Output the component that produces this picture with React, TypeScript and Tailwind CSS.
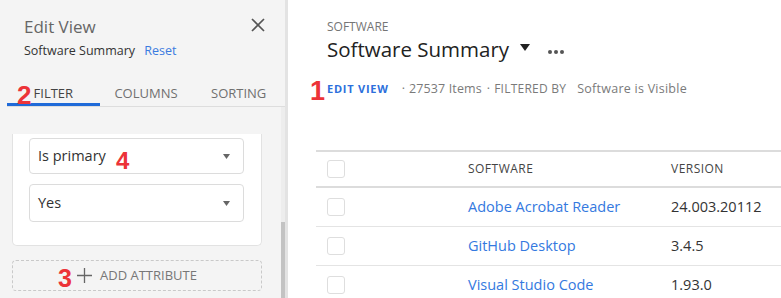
import { ReactNode } from 'react';

function Mark({ children, className = '' }: { children: ReactNode; className?: string }) {
  return (
    <span className={`absolute font-['Liberation_Sans',Arial,sans-serif] font-bold text-[#ec3338] leading-none ${className}`}>
      {children}
    </span>
  );
}

function Caret({ className = '' }: { className?: string }) {
  return (
    <svg className={className} viewBox="0 0 10 7" fill="currentColor">
      <path d="M0 0h10L5 7z" />
    </svg>
  );
}

function Select({ label, children }: { label: string; children?: ReactNode }) {
  return (
    <div className="relative flex items-center justify-between bg-white border border-[#dcdcdc] rounded-[4px] pl-[8px] pr-[13px] h-full">
      <span className="text-[14.5px] text-[#333]">{label}</span>
      {children}
      <Caret className="w-[7px] h-[5px] text-[#666]" />
    </div>
  );
}

function Checkbox() {
  return <div className="w-[18px] h-[18px] rounded-[3px] border border-[#dedede] bg-white" />;
}

const rows = [
  { name: 'Adobe Acrobat Reader', version: '24.003.20112' },
  { name: 'GitHub Desktop', version: '3.4.5' },
  { name: 'Visual Studio Code', version: '1.93.0' },
];

export default function App() {
  return (
    <div className="w-[781px] h-[298px] flex overflow-hidden bg-white font-['Open_Sans',sans-serif]">
      {/* Edit view panel */}
      <aside className="w-[288px] shrink-0 flex flex-col bg-[#f4f4f4] border-r-[3px] border-[#e3e3e3]">
        <div className="flex justify-between pl-[24px] pr-[20px] pt-[15px]">
          <h2 className="text-[17px] leading-[24px] text-[#666]">Edit View</h2>
          <svg className="w-[14px] h-[14px] mt-[3px] text-[#555]" viewBox="0 0 14 14" fill="none" stroke="currentColor" strokeWidth={1.7}>
            <path d="M1 1l12 12M13 1L1 13" />
          </svg>
        </div>
        <p className="pl-[24px] mt-[3px] text-[12.5px] leading-[18px] text-[#333]">
          Software Summary <span className="ml-[6px] text-[#3b7be0]">Reset</span>
        </p>

        <div className="relative flex ml-[7px] mt-[24px] border-b border-[#dddddd]">
          <Mark className="left-[10px] top-[-2px] text-[26px]">2</Mark>
          <div className="flex-1 text-center text-[13px] leading-[18px] pb-[1px] border-b-[3px] border-[#1f6ad8] text-[#444]">FILTER</div>
          <div className="flex-1 text-center text-[13px] leading-[18px] pb-[1px] border-b-[3px] border-transparent text-[#707070]">COLUMNS</div>
          <div className="flex-1 text-center text-[13px] leading-[18px] pb-[1px] border-b-[3px] border-transparent text-[#707070]">SORTING</div>
        </div>

        <div className="flex flex-1">
          <div className="flex-1 pt-[27px] pl-[12px] pr-[19px]">
            <div className="bg-white border border-t-0 border-[#e2e2e2] rounded-b-[5px] pl-[16px] pr-[17px] pt-[4px] pb-[23px] flex flex-col gap-[10px]">
              <div className="h-[36px]">
                <Select label="Is primary">
                  <Mark className="left-[86px] top-[10px] text-[24px]">4</Mark>
                </Select>
              </div>
              <div className="h-[38px]">
                <Select label="Yes" />
              </div>
            </div>
            <div className="relative mt-[14px] h-[31px] border border-dashed border-[#c9c9c9] rounded-[4px] flex items-center justify-center gap-[8px] text-[#777]">
              <Mark className="left-[45px] top-[5px] text-[25px]">3</Mark>
              <svg className="w-[15px] h-[15px] text-[#666]" viewBox="0 0 15 15" fill="none" stroke="currentColor" strokeWidth={1.3}>
                <path d="M7.5 0v15M0 7.5h15" />
              </svg>
              <span className="text-[13px] leading-none">ADD ATTRIBUTE</span>
            </div>
          </div>
          <div className="w-[4px] bg-[#ededed] flex flex-col">
            <div className="h-[115px]" />
            <div className="flex-1 bg-[#c3c3c3]" />
          </div>
        </div>
      </aside>

      {/* Main */}
      <main className="flex-1 flex flex-col">
        <div className="pl-[39px] pt-[20px]">
          <p className="text-[12px] leading-[14px] text-[#757575]">SOFTWARE</p>
          <div className="flex items-center mt-[1px] h-[28px]">
            <h1 className="text-[20.5px] leading-[28px] text-[#222]">Software Summary</h1>
            <Caret className="w-[10px] h-[7px] ml-[11px] mb-[4px] text-[#222]" />
            <div className="flex gap-[2px] ml-[18px] mt-[6px]">
              <span className="w-[4px] h-[4px] rounded-full bg-[#555]" />
              <span className="w-[4px] h-[4px] rounded-full bg-[#555]" />
              <span className="w-[4px] h-[4px] rounded-full bg-[#555]" />
            </div>
          </div>
          <div className="relative flex items-center mt-[17px] h-[18px] text-[#7a7a7a]">
            <Mark className="left-[-17px] top-[-2px] text-[27px]">1</Mark>
            <span className="text-[11px] font-bold tracking-[0.07em] text-[#2c6fdc]">EDIT VIEW</span>
            <span className="ml-[13px] text-[12.5px]">·</span>
            <span className="ml-[4px] text-[12.5px] tracking-[0.01em]">27537 Items</span>
            <span className="ml-[5px] text-[12.5px]">·</span>
            <span className="ml-[4px] text-[12px] tracking-[0.02em]">FILTERED BY</span>
            <span className="ml-[11px] text-[12.5px] tracking-[0.02em]">Software is Visible</span>
          </div>
        </div>

        <div className="ml-[28px] mt-[52px] border-t-2 border-[#dcdcdc]">
          <div className="flex items-center h-[36px] border-b-2 border-[#dcdcdc]">
            <div className="w-[152px] pl-[11px]"><Checkbox /></div>
            <div className="w-[203px] text-[12px] tracking-[0.04em] text-[#444]">SOFTWARE</div>
            <div className="text-[12px] tracking-[0.04em] text-[#444]">VERSION</div>
          </div>
          {rows.map((r) => (
            <div key={r.name} className="flex items-center h-[39px] border-b border-[#e4e4e4]">
              <div className="w-[152px] pl-[11px]"><Checkbox /></div>
              <div className="w-[203px] text-[14.5px] text-[#3479e0]">{r.name}</div>
              <div className="text-[14.5px] text-[#333]">{r.version}</div>
            </div>
          ))}
        </div>
      </main>
    </div>
  );
}
